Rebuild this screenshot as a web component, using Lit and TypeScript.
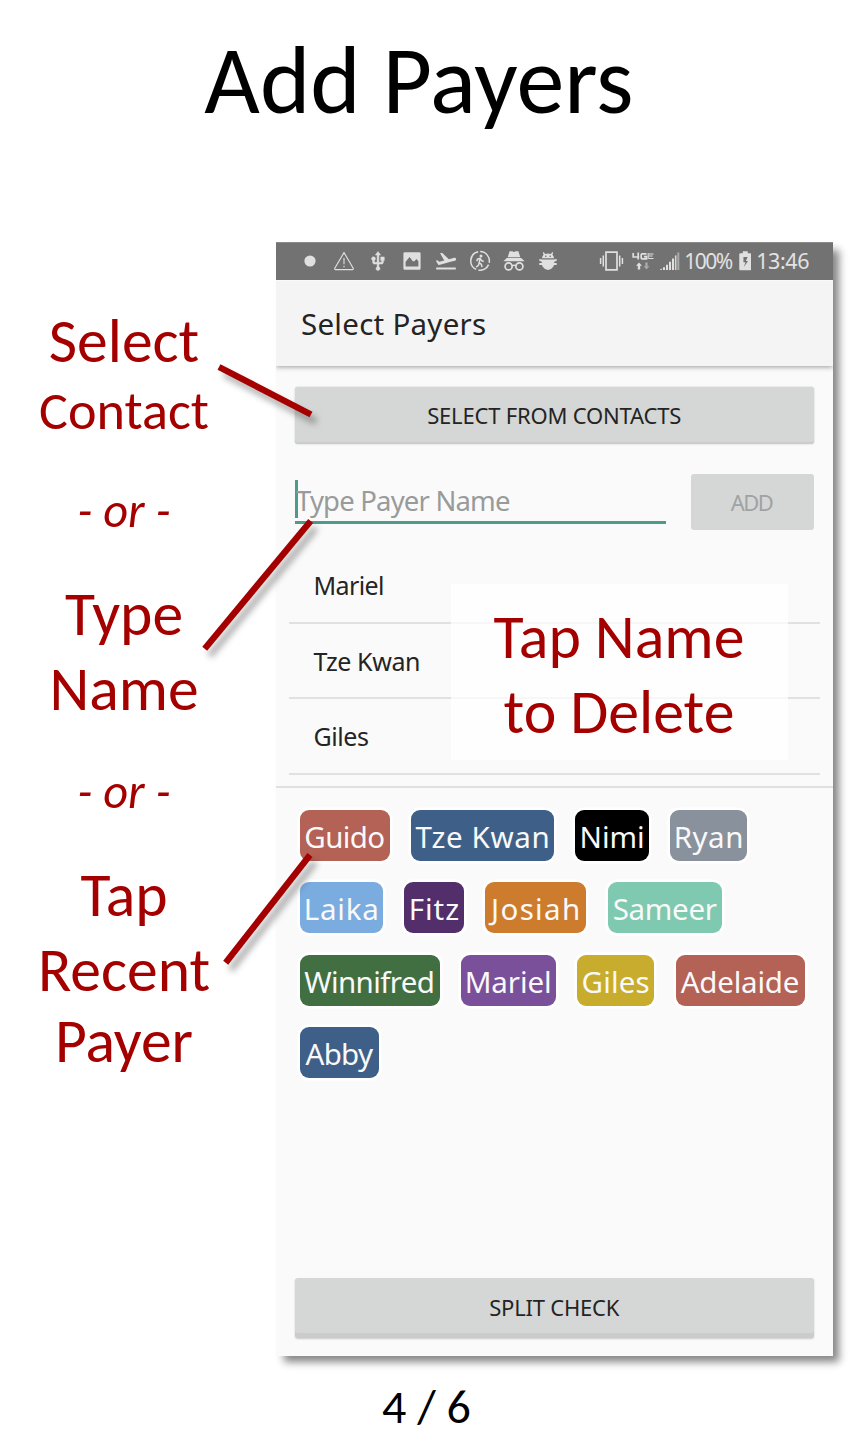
import { LitElement, html, css, svg } from 'lit';

const pen = document.createElement('canvas').getContext('2d')!;

/** Text whose letter spacing brings its drawn width to the wanted one. */
const fit = (text: string, size: number, width: number) => {
  pen.font = `${size}px "Noto Sans", "Open Sans", sans-serif`;
  const m = pen.measureText(text);
  const ink = m.actualBoundingBoxLeft + m.actualBoundingBoxRight;
  const s = ((width - ink) / (text.length - 1)).toFixed(3);
  return html`<span style="letter-spacing:${s}px;margin-right:calc(-1 * ${s}px)">${text}</span>`;
};

const ICONS = [
  svg`<circle cx="12" cy="12" r="5.6"/>`,
  svg`<path d="M12 3.6 L21.2 19.2 Q21.6 20.4 20.4 20.6 H3.6 Q2.4 20.4 2.8 19.2 Z" class="o"/><path d="M12 9v6.2M12 16.8v1.4" class="o"/>`,
  svg`<g transform="translate(1.2 1.6) scale(.9)"><path stroke="#e0e0e0" stroke-width=".5" d="M15 7v4h1v2h-3V5h2l-3-4-3 4h2v8H8v-2.07c.7-.37 1.2-1.08 1.2-1.93 0-1.21-.99-2.2-2.2-2.2-1.21 0-2.2.99-2.2 2.2 0 .85.5 1.56 1.2 1.93V13c0 1.11.89 2 2 2h3v3.05c-.71.37-1.2 1.1-1.2 1.95 0 1.22.99 2.2 2.2 2.2 1.21 0 2.2-.98 2.2-2.2 0-.85-.49-1.58-1.2-1.95V15h3c1.11 0 2-.89 2-2v-2h1V7h-4z"/></g>`,
  svg`<path fill-rule="evenodd" d="M4.8 3.2h14.4q1.4 0 1.4 1.4v14.8q0 1.4-1.4 1.4H4.8q-1.4 0-1.4-1.4V4.6q0-1.4 1.4-1.4zM5.6 17.5h12.8v-5.2l-2-2.2-2 2.2h-1.6l-3.2-4.2-4 4.6z"/>`,
  svg`<g transform="translate(0 .2)"><path d="M2.2 18.3h19.6v2H2.2zm19.87-8.66c-.21-.8-1.04-1.28-1.84-1.06L14.92 10l-6.9-6.43-1.93.51 4.14 7.17-4.97 1.33-1.97-1.54-1.45.39 1.82 3.16.77 1.33 1.6-.43 5.31-1.42 4.35-1.16L21 11.49c.81-.23 1.28-1.05 1.07-1.85z"/></g>`,
  svg`<path class="o w" d="M10.2 2.7a9.4 9.4 0 0 0-2 17.7M10.4 21.2a9.4 9.4 0 0 0 10.2-5.6M21.2 13.8A9.4 9.4 0 0 0 12.2 2.6"/><circle cx="13" cy="6.9" r="1.5"/><path class="o w" d="M8.8 12.2l.7-2 2.6-.9 1.6 2.4 2 .8M12 9.6l-.8 4 2.2 1.8.6 2.8M11.2 13.8l-.8 2.6-2.2 1.8"/>`,
  svg`<path d="M7.6 2.2h2.6l1.8.7 1.8-.7h2.6l1.9 6H5.7zM4.8 9h14.4l3.4 3.2H1.4z"/><g class="o w2"><circle cx="6.6" cy="17.4" r="3.5"/><circle cx="17.4" cy="17.4" r="3.5"/><path d="M10.1 16.8q1.9-1.1 3.8 0"/></g>`,
  svg`<path d="M6 9.3q.1-2.3 1.6-3.5L6.8 3.7l.9-.6 1.5 1.8q2.8-.7 5.6 0l1.5-1.8.9.6-.8 2.1q1.5 1.2 1.6 3.5z"/><path d="M3.3 9.9l3.2.6h11l3.2-.6v1.9l-2.5.9v1.2h2.5v2H18q-.3 1-.9 2l-.1.2Q15.2 21 12 21t-5-2.9l-.1-.2q-.6-1-.9-2H3.3v-2h2.5v-1.200l-2.500-.900z"/><circle cx="9.8" cy="7.3" r=".8" class="hole"/><circle cx="14.2" cy="7.3" r=".8" class="hole"/>`,
];

const CHIPS: [string, string, number, number][] = [
  ['Guido', '#b46156', 90.5, 79], ['Tze Kwan', '#3e6088', 143, 132], ['Nimi', '#000000', 73.5, 61.5], ['Ryan', '#89919d', 77, 65.5],
  ['Laika', '#7aace0', 83.5, 71.5], ['Fitz', '#522e6b', 59.5, 47.5], ['Josiah', '#cd7c2e', 101.5, 90], ['Sameer', '#7fc9b0', 114.5, 103],
  ['Winnifred', '#426f41', 140, 128.5], ['Mariel', '#7b509b', 95, 83.5], ['Giles', '#c7ac2d', 77.5, 66], ['Adelaide', '#b46156', 129, 118],
  ['Abby', '#3e6088', 79.5, 68.5],
];

class AppRoot extends LitElement {
  static styles = css`
    :host { display: block; position: relative; width: 853px; height: 1429px; overflow: hidden; background: #fff; font-family: "Noto Sans", "Open Sans", sans-serif; color: #242424; }
    * { box-sizing: border-box; }
    span { display: inline-block; white-space: pre; font-kerning: normal; }
    .title { margin: 0; height: 242px; padding: 31px 15px 0 0; text-align: center; font: 400 96px/100px Carlito, Lato, sans-serif; color: #000; }
    .main { display: flex; height: 1114px; }
    .notes { width: 276px; padding: 69px 28px 0 0; text-align: center; color: #a50000; font: 61.6px/60px Carlito, Lato, sans-serif; }
    .notes div { height: 60px; }
    .notes .contact { font-size: 54.2px; margin: 10px 0 40px; }
    .notes .or { font-size: 48.4px; font-style: italic; margin-bottom: 43px; }
    .notes .name { margin: 15px 0 43px; }
    .notes .or2 { margin-bottom: 43px; }
    .notes .recent { margin: 15px 0 11px; }
    .phone { display: flex; flex-direction: column; width: 557px; background: #fafafa; box-shadow: 7px 7px 8px -1px rgba(0,0,0,.48); }
    .status { height: 38px; flex: none; display: flex; align-items: center; padding: 0 0 2px 16.7px; background: #727272; border-top: 1px solid #8b8b8b; color: #e2e2e2; font-size: 21.5px; line-height: 34px; }
    .cell { display: flex; justify-content: center; width: 34px; }
    svg { display: block; fill: #e0e0e0; }
    .o { fill: none; stroke: #e0e0e0; stroke-width: 1.1; }
    .w { stroke-width: 1.5; }
    .w2 { stroke-width: 1.7; }
    .hole { fill: #727272; }
    .vib { margin-left: 34px; }
    .net { margin-left: 8px; }
    .sig { margin-left: 6px; }
    .pct { margin-left: 4.5px; width: 54.5px; font-size: 21px; }
    .time { margin-left: 5px; }
    .bar { height: 86px; flex: none; padding: 0 0 0 25px; background: #f4f4f4; border-top: 1px solid #f9f9f9; font-size: 29.5px; line-height: 85px; box-shadow: 0 1px 5px rgba(0,0,0,.38); clip-path: inset(0 0 -10px 0); }
    .btn { display: block; width: 519.5px; margin: 21px 0 0 18.5px; height: 57px; padding: 0 0 1px; border: 0; border-radius: 3px; background: #d5d7d6; font: 22px/55px "Noto Sans", "Open Sans", sans-serif; color: #242424; text-align: center; box-shadow: inset 0 -2px 0 #cbcccb, 0 0 2px rgba(0,0,0,.22); }
    .entry { display: flex; justify-content: space-between; width: 519px; margin: 30px 0 0 19px; height: 56px; }
    .field { display: flex; width: 371px; height: 50px; border-bottom: 3px solid #4f9a8a; color: #999b9a; font-size: 27.5px; line-height: 53px; }
    .caret { width: 3px; height: 38px; margin: 6px -2px 0 0; background: #4f9a8a; }
    .add { width: 123.5px; height: 56px; margin: 0; padding: 0; color: #a1a2a2; box-shadow: none; }
    .list { margin: 18px 13px 0; height: 227px; }
    .row { height: 75.7px; border-bottom: 2px solid #e1e1e1; padding-left: 24.5px; font-size: 25px; line-height: 74.6px; }
    .sep { margin-top: 11px; height: 1.5px; background: #e0e0e0; }
    .chips { display: flex; flex-wrap: wrap; gap: 21.2px 21.2px; padding: 22.7px 0 0 23.5px; }
    .chip { height: 51px; padding-top: 2px; border-radius: 9px; box-shadow: 0 0 0 2.5px #fff; color: #f9f9f9; font-size: 29.5px; line-height: 50px; text-align: center; }
    .split { margin-top: auto; margin-bottom: 18px; flex: none; height: 60px; padding: 0 0 2px; box-shadow: inset 0 -5px 0 #cbcbcb, 0 1px 2px rgba(0,0,0,.2); line-height: 58px; }
    .tip { position: absolute; left: 451px; top: 584px; width: 337px; height: 176px; padding: 15.5px 1px 0 0; background: rgba(255,255,255,.72); color: #a50000; text-align: center; font: 61.8px/75px Carlito, Lato, sans-serif; }
    .lines { position: absolute; left: 0; top: 0; overflow: visible; }
    .lines path { stroke: #a50000; stroke-width: 6.4; filter: drop-shadow(5px 7px 3px rgba(0,0,0,.32)); }
    .page { height: 73px; padding-top: 29px; text-align: center; font: 48px/44px Carlito, Lato, sans-serif; color: #000; }
  `;
  render() {
    return html`
      <h1 class="title">Add Payers</h1>
      <div class="main">
        <div class="notes">
          <div>Select</div>
          <div class="contact">Contact</div>
          <div class="or">- or -</div>
          <div>Type</div>
          <div class="name">Name</div>
          <div class="or or2">- or -</div>
          <div>Tap</div>
          <div class="recent">Recent</div>
          <div>Payer</div>
        </div>
        <div class="phone">
          <div class="status">
            ${ICONS.map((i) => html`<div class="cell"><svg width="24" height="24" viewBox="0 0 24 24">${i}</svg></div>`)}
            <svg class="vib" width="25" height="24" viewBox="0 0 25 24"><path class="o w2" d="M7 3.2h11v17.6H7z"/><path class="o w" d="M4.3 6.5v11M1.6 9v6M20.7 6.5v11M23.4 9v6"/></svg>
            <svg class="net" width="22" height="24" viewBox="0 0 22 24"><path class="o w2" d="M1.2 4v4h6M6.2 3.5v7M14.5 4.8H10.2q-1 0-1 1v3q0 1 1 1h4.3V7.6h-2.5"/><path class="o" d="M16.2 4v6M17 5h4.5M17 7h3.5M17 9.5h4.5"/><path d="M7 13.5l3 3.3H8.2v3.7H5.8v-3.7H4z"/><path opacity=".5" d="M14.5 20.5l3-3.3h-1.8v-3.7h-2.4v3.7h-1.8z"/></svg>
            <svg class="sig" width="20" height="24" viewBox="0 0 20 24"><path d="M0 21h1.8v-1.6L0 20.6zM3 18.3h2V21H3zM6 15.8h2V21H6zM9 12.8h2V21H9zM12 9.5h2V21h-2z"/><path opacity=".9" d="M14.9 6.4h1.6V21h-1.6z"/><path opacity=".5" d="M17.3 3.4h2V21h-2z"/></svg>
            <div class="pct">${fit('100%', 21, 47.5)}</div>
            <svg width="12.5" height="24" viewBox="0 0 12 24"><path fill-rule="evenodd" d="M3.5 2.2h5v2H11q1 0 1 1v15q0 1-1 1H1q-1 0-1-1v-15q0-1 1-1h2.5zM4.2 8v5.2h2L4.6 18l4.2-6H6.6L8.4 8z"/></svg>
            <div class="time">${fit('13:46', 21.5, 52)}</div>
          </div>
          <div class="bar">${fit('Select Payers', 29.5, 183)}</div>
          <button class="btn">${fit('SELECT FROM CONTACTS', 22, 253)}</button>
          <div class="entry">
            <div class="field"><div class="caret"></div>${fit('Type Payer Name', 27.5, 214)}</div>
            <button class="btn add">${fit('ADD', 22, 42)}</button>
          </div>
          <div class="list">
            <div class="row">${fit('Mariel', 25, 67.5)}</div>
            <div class="row">${fit('Tze Kwan', 25, 105.5)}</div>
            <div class="row">${fit('Giles', 25, 53.5)}</div>
          </div>
          <div class="sep"></div>
          <div class="chips">
            ${CHIPS.map(([n, c, w, t]) => html`<div class="chip" style="background:${c};width:${w}px">${fit(n, 29.5, t)}</div>`)}
          </div>
          <button class="btn split">${fit('SPLIT CHECK', 22, 129.5)}</button>
        </div>
      </div>
      <div class="page">4 / 6</div>
      <div class="tip"><div>Tap Name</div><div>to Delete</div></div>
      <svg class="lines" width="853" height="1429"><path d="M219 367L311 414.5"/><path d="M204.7 648.7L310.7 521"/><path d="M225.7 962.7L310 855"/></svg>
    `;
  }
}
customElements.define('app-root', AppRoot);
